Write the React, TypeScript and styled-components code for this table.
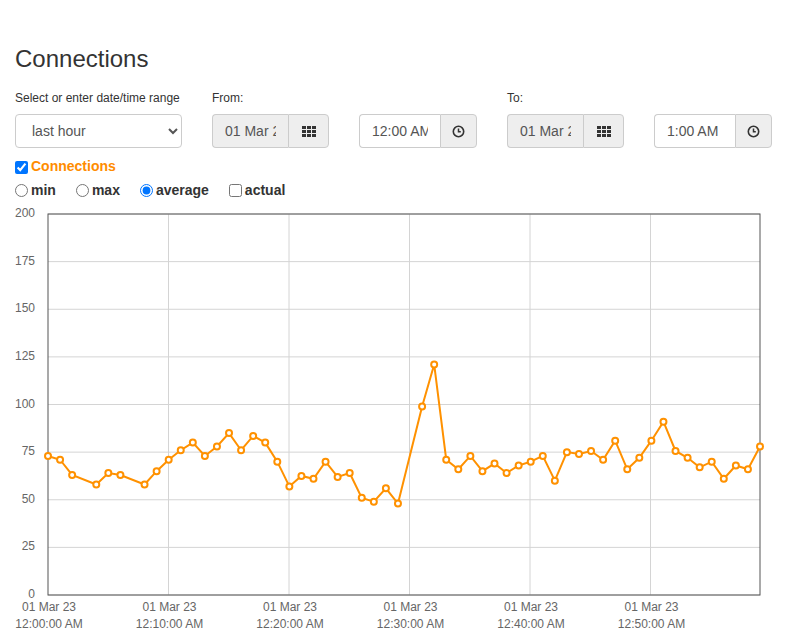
import React, { useState } from "react";
import styled, { createGlobalStyle } from "styled-components";

const GlobalStyle = createGlobalStyle`
    body {
        margin: 0;
        background: #fff;
        font-family: "Liberation Sans", Arial, sans-serif;
        color: #333;
    }
`;

// minute offset from 12:00 AM, average connections
const DATA: [number, number][] = [
    [0, 73], [1, 71], [2, 63], [4, 58], [5, 64], [6, 63], [8, 58], [9, 65],
    [10, 71], [11, 76], [12, 80], [13, 73], [14, 78], [15, 85], [16, 76],
    [17, 83.5], [18, 80], [19, 70], [20, 57], [21, 62.5], [22, 61], [23, 70],
    [24, 62], [25, 64], [26, 51], [27, 49], [28, 56], [29, 48], [31, 99],
    [32, 121], [33, 71], [34, 66], [35, 73], [36, 65], [37, 69], [38, 64],
    [39, 68], [40, 70], [41, 73], [42, 60], [43, 75], [44, 74], [45, 75.6],
    [46, 71], [47, 81], [48, 66], [49, 72], [50, 81], [51, 91], [52, 75.6],
    [53, 72], [54, 67], [55, 70], [56, 61], [57, 68], [58, 66], [59, 78],
];

const PLOT = { left: 33, top: 8, width: 712, height: 381 };
const xOf = (m: number) => PLOT.left + (m / 59) * PLOT.width;
const yOf = (v: number) => PLOT.top + PLOT.height - (v / 200) * PLOT.height;

const GridIcon = () => (
    <svg width="14" height="11" viewBox="0 0 14 11">
        {[0, 1, 2].map((r) =>
            [0, 1, 2].map((c) => (
                <rect key={`${r}-${c}`} x={c * 5} y={r * 4} width="4" height="3" fill="#333" />
            ))
        )}
    </svg>
);

const ClockIcon = () => (
    <svg width="13" height="13" viewBox="0 0 13 13">
        <circle cx="6.5" cy="6.5" r="5.2" fill="none" stroke="#333" strokeWidth="1.6" />
        <path d="M6.5 3.5 V6.8 H8.8" fill="none" stroke="#333" strokeWidth="1.5" />
    </svg>
);

const Chart = () => {
    const yTicks = [0, 25, 50, 75, 100, 125, 150, 175, 200];
    const xTicks = [0, 10, 20, 30, 40, 50];
    const line = DATA.map(([m, v]) => `${xOf(m)},${yOf(v)}`).join(" ");
    return (
        <ChartSvg width="772" height="430" viewBox="0 0 772 430">
            {yTicks.map((t) => (
                <g key={t}>
                    <line x1={PLOT.left} x2={PLOT.left + PLOT.width} y1={yOf(t)} y2={yOf(t)} stroke="#d4d4d4" />
                    <AxisText x={20} y={yOf(t) + 3} textAnchor="end">
                        {t}
                    </AxisText>
                </g>
            ))}
            {xTicks.map((t) => {
                const px = PLOT.left + t * 12.05;
                return (
                    <g key={t}>
                        {t > 0 && <line x1={px} x2={px} y1={PLOT.top} y2={PLOT.top + PLOT.height} stroke="#d4d4d4" />}
                        <AxisText x={px + 1} y={405} textAnchor="middle">
                            01 Mar 23
                        </AxisText>
                        <AxisText x={px + 1} y={422} textAnchor="middle">
                            {`12:${t === 0 ? "00" : t}:00 AM`}
                        </AxisText>
                    </g>
                );
            })}
            <rect x={PLOT.left} y={PLOT.top} width={PLOT.width} height={PLOT.height} fill="none" stroke="#555" />
            <polyline points={line} fill="none" stroke="#ff9100" strokeWidth="2" />
            {DATA.map(([m, v]) => (
                <circle key={m} cx={xOf(m)} cy={yOf(v)} r="3" fill="#fff" stroke="#ff9100" strokeWidth="2" />
            ))}
        </ChartSvg>
    );
};

const App = () => {
    const [stat, setStat] = useState("average");
    const [show, setShow] = useState(true);
    const [actual, setActual] = useState(false);
    return (
        <Page>
            <GlobalStyle />
            <Title>Connections</Title>
            <Controls>
                <Field>
                    <Label>Select or enter date/time range</Label>
                    <Select defaultValue="last hour">
                        <option>last hour</option>
                        <option>last day</option>
                        <option>last week</option>
                    </Select>
                </Field>
                <Field>
                    <Label>From:</Label>
                    <InputGroup>
                        <Input readOnly value="01 Mar 2023" $disabled />
                        <AddonButton>
                            <GridIcon />
                        </AddonButton>
                    </InputGroup>
                </Field>
                <Field>
                    <Label>&nbsp;</Label>
                    <InputGroup>
                        <Input readOnly value="12:00 AM" $wide />
                        <AddonButton $narrow>
                            <ClockIcon />
                        </AddonButton>
                    </InputGroup>
                </Field>
                <Field>
                    <Label>To:</Label>
                    <InputGroup>
                        <Input readOnly value="01 Mar 2023" $disabled />
                        <AddonButton>
                            <GridIcon />
                        </AddonButton>
                    </InputGroup>
                </Field>
                <Field>
                    <Label>&nbsp;</Label>
                    <InputGroup>
                        <Input readOnly value="1:00 AM" $wide />
                        <AddonButton $narrow>
                            <ClockIcon />
                        </AddonButton>
                    </InputGroup>
                </Field>
            </Controls>
            <SeriesToggle>
                <input type="checkbox" checked={show} onChange={() => setShow(!show)} />
                Connections
            </SeriesToggle>
            <Options>
                {["min", "max", "average"].map((s) => (
                    <Option key={s}>
                        <input type="radio" name="stat" checked={stat === s} onChange={() => setStat(s)} />
                        {s}
                    </Option>
                ))}
                <Option>
                    <input type="checkbox" checked={actual} onChange={() => setActual(!actual)} />
                    actual
                </Option>
            </Options>
            <Chart />
        </Page>
    );
};

export default App;

const Page = styled.div`
    padding: 41px 0 0 15px;
`;

const Title = styled.h1`
    margin: 0 0 14px;
    font-size: 24px;
    font-weight: normal;
    line-height: 36px;
    color: #333;
`;

const Controls = styled.div`
    display: flex;
    gap: 30px;
`;

const Field = styled.div`
    display: flex;
    flex-direction: column;
`;

const Label = styled.label`
    font-size: 12px;
    line-height: 14px;
    margin-bottom: 9px;
    color: #333;
`;

const Select = styled.select`
    width: 167px;
    height: 34px;
    padding: 0 12px;
    border: 1px solid #ccc;
    border-radius: 4px;
    background: #fff;
    font-family: "Liberation Sans", Arial, sans-serif;
    font-size: 14px;
    color: #555;
    box-sizing: border-box;
`;

const InputGroup = styled.div`
    display: flex;
    height: 34px;
`;

const Input = styled.input<{ $disabled?: boolean; $wide?: boolean }>`
    width: ${(p) => (p.$wide ? "81px" : "76px")};
    height: 34px;
    box-sizing: border-box;
    padding: 0 12px;
    border: 1px solid #ccc;
    border-right: none;
    border-radius: 4px 0 0 4px;
    background: ${(p) => (p.$disabled ? "#eee" : "#fff")};
    font-family: "Liberation Sans", Arial, sans-serif;
    font-size: 14px;
    color: #555;
    outline: none;
`;

const AddonButton = styled.button<{ $narrow?: boolean }>`
    width: ${(p) => (p.$narrow ? "37px" : "41px")};
    height: 34px;
    box-sizing: border-box;
    display: flex;
    align-items: center;
    justify-content: center;
    border: 1px solid #ccc;
    border-radius: 0 4px 4px 0;
    background: #eee;
    padding: 0;
    cursor: pointer;
`;

const SeriesToggle = styled.label`
    display: flex;
    align-items: center;
    margin-top: 10px;
    font-size: 14px;
    font-weight: bold;
    color: #ff8c00;
    line-height: 16px;

    input {
        margin: 2px 3px 0 0;
        width: 13px;
        height: 13px;
    }
`;

const Options = styled.div`
    display: flex;
    gap: 20px;
    margin-top: 7px;
`;

const Option = styled.label`
    display: flex;
    align-items: center;
    font-size: 14px;
    font-weight: bold;
    color: #333;
    line-height: 18px;

    input {
        margin: 0 3px 0 0;
    }
`;

const ChartSvg = styled.svg`
    display: block;
    margin-top: 7px;
    overflow: visible;
`;

const AxisText = styled.text`
    font-family: "Liberation Sans", Arial, sans-serif;
    font-size: 12px;
    fill: #666;
`;
